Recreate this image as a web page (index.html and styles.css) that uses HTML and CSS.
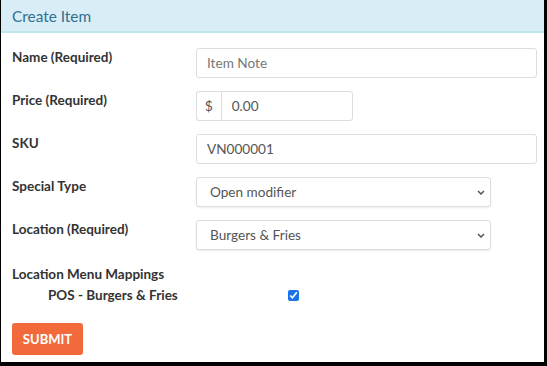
FILE: index.html
```html
<!DOCTYPE html>
<html lang="en">
<head>
    <meta charset="UTF-8">
    <meta name="viewport" content="width=device-width, initial-scale=1.0">
    <title>Create Item</title>
    <link rel="stylesheet" href="styles.css">
</head>
<body>
    <div class="panel">
        <div class="panel-heading">Create Item</div>
        <form class="panel-body">
            <div class="form-row">
                <label class="form-label">Name (Required)</label>
                <input class="form-control" type="text" placeholder="Item Note">
            </div>
            <div class="form-row">
                <label class="form-label">Price (Required)</label>
                <div class="input-group">
                    <span class="addon">$</span>
                    <input class="form-control group-input" type="text" value="0.00">
                </div>
            </div>
            <div class="form-row">
                <label class="form-label">SKU</label>
                <input class="form-control" type="text" value="VN000001">
            </div>
            <div class="form-row">
                <label class="form-label">Special Type</label>
                <select class="form-control select-control">
                    <option>Open modifier</option>
                </select>
            </div>
            <div class="form-row">
                <label class="form-label">Location (Required)</label>
                <select class="form-control select-control">
                    <option>Burgers &amp; Fries</option>
                </select>
            </div>
            <div class="mappings">
                <div class="form-label">Location Menu Mappings</div>
                <div class="mapping-row">
                    <span class="mapping-name">POS - Burgers &amp; Fries</span>
                    <input class="mapping-check" type="checkbox" checked>
                </div>
            </div>
            <button class="button" type="button">SUBMIT</button>
        </form>
    </div>
</body>
</html>
```

FILE: styles.css
```css
body {
    margin: 0;
    font-family: Lato, "Liberation Sans", sans-serif;
    background: #fff;
    color: #333;
}
.panel {
    width: 543px;
    height: 362px;
    border-left: 1px solid #000;
    border-right: 3px solid #000;
    border-bottom: 4px solid #000;
    background: #fff;
    overflow: hidden;
}
.panel-heading {
    height: 33px;
    box-sizing: border-box;
    background-color: #d9edf7;
    border-bottom: 2px solid #bce8f1;
    color: #31708f;
    font-size: 15.4px;
    line-height: 32px;
    padding-left: 11px;
}
.panel-body {
    padding: 15px 7px 0 11px;
    margin: 0;
}
.form-row {
    display: grid;
    grid-template-columns: 184px 1fr;
    align-items: start;
    margin-bottom: 13px;
}
.form-label {
    font-size: 13.5px;
    font-weight: bold;
    color: #333;
    padding-top: 1px;
}
.form-control {
    box-sizing: border-box;
    height: 30px;
    width: 100%;
    border: 1px solid #ddd;
    border-radius: 3px;
    padding: 0 10px;
    font-family: inherit;
    font-size: 13.6px;
    color: #555;
    background: #fff;
    outline: none;
}
.form-control::placeholder {
    color: #777;
}
.input-group {
    display: flex;
    width: 157px;
}
.addon {
    box-sizing: border-box;
    width: 30px;
    height: 30px;
    border: 1px solid #ddd;
    border-right: none;
    border-radius: 3px 0 0 3px;
    font-size: 14px;
    color: #555;
    line-height: 28px;
    text-align: center;
}
.group-input {
    border-radius: 0 3px 3px 0;
}
.select-control {
    width: 295px;
    -webkit-appearance: none;
    appearance: none;
    padding-left: 13px;
    box-shadow: 0 1px 2px rgba(0, 0, 0, 0.08);
    background-image: url("data:image/svg+xml,%3Csvg xmlns='http://www.w3.org/2000/svg' width='8' height='5' viewBox='0 0 8 5'%3E%3Cpath d='M1 1l3 3 3-3' fill='none' stroke='%23555' stroke-width='1.5'/%3E%3C/svg%3E");
    background-repeat: no-repeat;
    background-position: right 5px center;
}
.mappings {
    margin-top: 15px;
}
.mapping-row {
    display: flex;
    align-items: center;
    margin-top: 5px;
}
.mapping-name {
    width: 240px;
    padding-left: 36px;
    font-size: 13.5px;
    font-weight: bold;
    color: #333;
}
.mapping-check {
    width: 11px;
    height: 11px;
    margin: 0;
    accent-color: #1a73e8;
}
.button {
    margin-top: 20px;
    width: 71px;
    height: 32px;
    background-color: #f26a3b;
    color: white;
    border: none;
    border-radius: 3px;
    font-family: inherit;
    font-size: 13px;
    font-weight: bold;
    cursor: pointer;
}
```
